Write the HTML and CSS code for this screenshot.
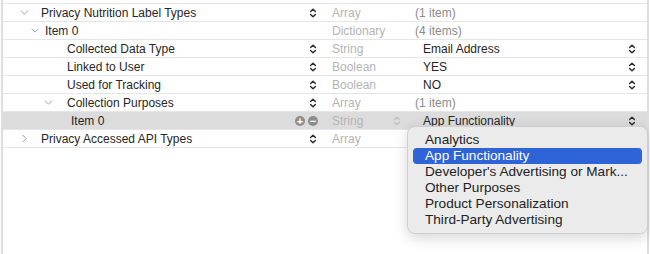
FILE: index.html
```html
<!DOCTYPE html>
<html lang="en">

<head>
  <meta charset="UTF-8">
  <title>Info.plist - Privacy Manifest</title>
  <link rel="stylesheet" href="styles.css">
</head>

<body>
  <!-- shared icons -->
  <svg class="defs" width="0" height="0" aria-hidden="true">
    <symbol id="stepper" viewBox="0 0 8 12">
      <path d="M1.6 4.6 L4 2.2 L6.4 4.6 M1.6 7.4 L4 9.8 L6.4 7.4" fill="none" stroke="currentColor" stroke-width="1.4" stroke-linecap="round" stroke-linejoin="round" />
    </symbol>
    <symbol id="chev-down" viewBox="0 0 10 6">
      <path d="M1 1 L5 5 L9 1" fill="none" stroke="currentColor" stroke-width="1.1" stroke-linecap="round" stroke-linejoin="round" />
    </symbol>
    <symbol id="chev-right" viewBox="0 0 6 10">
      <path d="M1 1 L5 5 L1 9" fill="none" stroke="currentColor" stroke-width="1.1" stroke-linecap="round" stroke-linejoin="round" />
    </symbol>
  </svg>

  <div class="plist">
    <div class="row">
      <div class="key lvl-0">
        <span class="toggle"><svg class="chev-down"><use href="#chev-down" /></svg></span>
        <span class="label">Privacy Nutrition Label Types</span>
        <svg class="stepper"><use href="#stepper" /></svg>
      </div>
      <div class="type">Array</div>
      <div class="value count">(1 item)</div>
    </div>

    <div class="row">
      <div class="key lvl-1">
        <span class="toggle small"><svg class="chev-down"><use href="#chev-down" /></svg></span>
        <span class="label">Item 0</span>
      </div>
      <div class="type">Dictionary</div>
      <div class="value count">(4 items)</div>
    </div>

    <div class="row">
      <div class="key lvl-2">
        <span class="label">Collected Data Type</span>
        <svg class="stepper"><use href="#stepper" /></svg>
      </div>
      <div class="type">String</div>
      <div class="value">
        <span>Email Address</span>
        <svg class="stepper"><use href="#stepper" /></svg>
      </div>
    </div>

    <div class="row">
      <div class="key lvl-2">
        <span class="label">Linked to User</span>
        <svg class="stepper"><use href="#stepper" /></svg>
      </div>
      <div class="type">Boolean</div>
      <div class="value">
        <span>YES</span>
        <svg class="stepper"><use href="#stepper" /></svg>
      </div>
    </div>

    <div class="row">
      <div class="key lvl-2">
        <span class="label">Used for Tracking</span>
        <svg class="stepper"><use href="#stepper" /></svg>
      </div>
      <div class="type">Boolean</div>
      <div class="value">
        <span>NO</span>
        <svg class="stepper"><use href="#stepper" /></svg>
      </div>
    </div>

    <div class="row">
      <div class="key lvl-2b">
        <span class="toggle"><svg class="chev-down"><use href="#chev-down" /></svg></span>
        <span class="label">Collection Purposes</span>
        <svg class="stepper"><use href="#stepper" /></svg>
      </div>
      <div class="type">Array</div>
      <div class="value count">(1 item)</div>
    </div>

    <div class="row selected">
      <div class="key lvl-3">
        <span class="label">Item 0</span>
        <span class="row-actions">
          <span class="circle-btn">+</span>
          <span class="circle-btn">−</span>
        </span>
      </div>
      <div class="type">
        <span>String</span>
        <svg class="stepper faint"><use href="#stepper" /></svg>
      </div>
      <div class="value">
        <span>App Functionality</span>
        <svg class="stepper"><use href="#stepper" /></svg>
      </div>
    </div>

    <div class="row last">
      <div class="key lvl-0">
        <span class="toggle"><svg class="chev-right"><use href="#chev-right" /></svg></span>
        <span class="label">Privacy Accessed API Types</span>
        <svg class="stepper"><use href="#stepper" /></svg>
      </div>
      <div class="type">Array</div>
      <div class="value"></div>
    </div>

    <!-- popup for the selected value -->
    <ul class="menu">
      <li>Analytics</li>
      <li class="active">App Functionality</li>
      <li>Developer's Advertising or Mark...</li>
      <li>Other Purposes</li>
      <li>Product Personalization</li>
      <li>Third-Party Advertising</li>
    </ul>
  </div>
</body>

</html>
```

FILE: styles.css
```css
* {
  box-sizing: border-box;
}

body {
  margin: 0;
  font-family: 'Liberation Sans', Arial, sans-serif;
  font-size: 12px;
  color: #262626;
  background: white;
}

.defs {
  position: absolute;
}

.plist {
  position: relative;
  margin: 0 1px;
  padding-top: 3px;
  height: 254px;
  border-left: 2px solid #dedede;
  border-right: 2px solid #dedede;
}

.row {
  display: grid;
  grid-template-columns: 319px 83px 1fr;
  height: 18px;
  border-top: 1px solid #e6e6e6;
}

.row.last {
  border-bottom: 1px solid #e6e6e6;
  height: 19px;
}

.row.selected {
  background: #dcdcdc;
}

.key,
.type,
.value {
  display: flex;
  align-items: center;
  white-space: nowrap;
}

.key {
  padding-right: 5px;
}

.toggle {
  display: flex;
  align-items: center;
  justify-content: center;
  width: 12px;
  color: #9a9a9a;
}

.chev-down {
  width: 9px;
  height: 5px;
}

.toggle.small .chev-down {
  width: 8px;
  height: 5px;
}

.chev-right {
  width: 5px;
  height: 9px;
}

/* indentation per level */
.lvl-0 {
  padding-left: 15px;
}

.lvl-0 .label {
  margin-left: 11px;
}

.lvl-1 {
  padding-left: 26px;
}

.lvl-1 .label {
  margin-left: 4px;
}

.lvl-2 {
  padding-left: 64px;
}

.lvl-2b {
  padding-left: 39px;
}

.lvl-2b .label {
  margin-left: 13px;
}

.lvl-3 {
  padding-left: 68px;
}

.stepper {
  width: 8px;
  height: 12px;
  margin-left: auto;
  color: #2b2b2b;
}

.stepper.faint {
  color: #c2c2c2;
}

.row-actions {
  display: flex;
  gap: 3px;
  margin-left: auto;
  margin-right: -1px;
}

.circle-btn {
  width: 10px;
  height: 10px;
  border-radius: 50%;
  background: #8c8c8c;
  color: white;
  font-size: 11px;
  font-weight: bold;
  line-height: 10px;
  text-align: center;
}

.type {
  padding-left: 10px;
  padding-right: 4px;
  color: #b4b4b4;
}

.value {
  padding-left: 18px;
  padding-right: 11px;
}

.value.count {
  padding-left: 10px;
  color: #8a8a8a;
}

.menu {
  position: absolute;
  left: 404px;
  top: 126px;
  width: 241px;
  margin: 0;
  padding: 5px;
  list-style: none;
  font-size: 13.6px;
  background: #ebebeb;
  border: 1px solid #cfcfcf;
  border-radius: 8px;
  box-shadow: 0 4px 14px rgba(0, 0, 0, 0.16);
}

.menu li {
  height: 16px;
  line-height: 16px;
  padding-left: 12px;
  border-radius: 4px;
  color: #222;
}

.menu li.active {
  background: #2f63d8;
  color: white;
}
```
